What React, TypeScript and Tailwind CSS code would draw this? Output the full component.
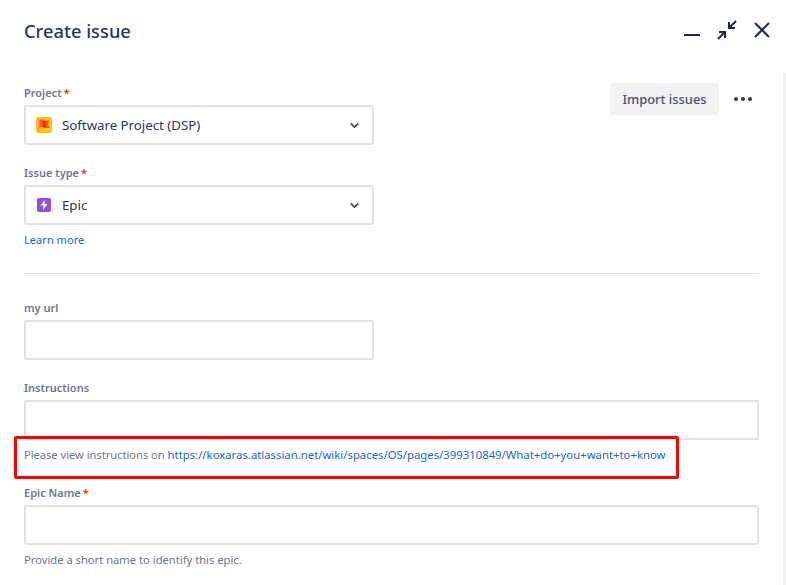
import { ChevronDown } from "lucide-react";

function Label({ text, required }: { text: string; required?: boolean }) {
  return (
    <div className="h-[20px] flex items-center text-[11px] font-semibold leading-[16px] text-[#6b778c]">
      {text}
      {required && <span className="ml-[2px] text-[#de350b]">*</span>}
    </div>
  );
}

function Input({ narrow }: { narrow?: boolean }) {
  return <div className={`h-[40px] mt-[2px] rounded-[3px] border-2 border-[#dfe1e6] bg-white ${narrow ? "w-[350px]" : "w-full"}`} />;
}

function Select({ icon, text }: { icon: React.ReactNode; text: string }) {
  return (
    <div className="h-[40px] w-[350px] mt-[2px] rounded-[3px] border-2 border-[#dfe1e6] bg-white flex items-center pl-[10px] pr-[11px]">
      <div className="w-[16px] h-[16px] flex items-center justify-center">{icon}</div>
      <span className="ml-[10px] pt-[2px] text-[13.250px] text-[#253858]">{text}</span>
      <ChevronDown className="ml-auto w-[13px] h-[13px] text-[#42526e]" strokeWidth={3.500} />
    </div>
  );
}

export default function App() {
  return (
    <div className="relative h-[585px] w-[786px] overflow-hidden bg-white font-['Noto_Sans',sans-serif]">
      {/* Header */}
      <div className="h-[63px] pl-[24px] pr-[12px] flex items-center">
        <h1 className="mb-[2px] text-[18.300px] font-medium text-[#253858]">Create issue</h1>
        <div className="ml-auto mb-[3px] flex items-center gap-[11px] text-[#172b4d]">
          <svg width="24" height="24" viewBox="0 0 24 24" fill="none" stroke="currentColor" strokeWidth="2">
            <path d="M4 17h16" />
          </svg>
          <svg width="24" height="24" viewBox="0 0 24 24" fill="none" stroke="currentColor" strokeWidth="2">
            <path d="M21 3l-6.500 6.500M14 4v6h6M3 21l6.500-6.500M10 20v-6H4" />
          </svg>
          <svg width="24" height="24" viewBox="0 0 24 24" fill="none" stroke="currentColor" strokeWidth="2">
            <path d="M5 5l14 14M19 5L5 19" />
          </svg>
        </div>
      </div>

      {/* Form */}
      <div className="pl-[24px] pr-[27px]">
        <div className="flex justify-between">
          <div className="pt-[20px]">
            <Label text="Project" required />
            <Select
              text="Software Project (DSP)"
              icon={
                <div className="w-[16px] h-[16px] rounded-[2px] bg-[#ffc400] flex items-center justify-center">
                  <svg width="14" height="14" viewBox="0 0 14 14">
                    <path d="M1 1h1.500v12H1z" fill="#ff8f73" />
                    <path d="M2.500 1.500h4v1h6l-1.500 3.500 1.500 4h-6v-1h-4z" fill="#ff5630" />
                    <path d="M6 3h3v6H6z" fill="#de350b" />
                  </svg>
                </div>
              }
            />
          </div>
          <div className="pt-[20px] flex items-start gap-[12px] pr-[4px]">
            <button className="h-[32px] w-[109px] pt-[1px] rounded-[3px] bg-[#f1f2f4] text-[12.900px] font-medium text-[#42526e]">
              Import issues
            </button>
            <svg className="mt-[8px]" width="24" height="16" viewBox="0 0 24 16" fill="#253858">
              <circle cx="5" cy="8" r="2" />
              <circle cx="12" cy="8" r="2" />
              <circle cx="19" cy="8" r="2" />
            </svg>
          </div>
        </div>

        <div className="mt-[18px]">
          <Label text="Issue type" required />
          <Select
            text="Epic"
            icon={
              <div className="w-[14px] h-[14px] rounded-[2px] bg-[#904ee2] flex items-center justify-center">
                <svg width="8" height="10" viewBox="0 0 8 10" fill="white">
                  <path d="M4.500 0L.5 5.500h3L3 10l4.500-6h-3z" />
                </svg>
              </div>
            }
          />
        </div>
        <a className="block mt-[6px] text-[11.100px] leading-[18px] text-[#1565dc]">Learn more</a>

        <div className="mt-[24px] h-px bg-[#dfe1e6]" />

        <div className="mt-[24px]">
          <Label text="my url" />
          <Input narrow />
        </div>

        <div className="mt-[18px]">
          <Label text="Instructions" />
          <Input />
          <p className="mt-[6px] text-[11.100px] leading-[18px] text-[#6b778c]">
            Please view instructions on{" "}
            <a className="text-[11.340px] text-[#1565dc]">https://koxaras.atlassian.net/wiki/spaces/OS/pages/399310849/What+do+you+want+to+know</a>
          </p>
        </div>

        <div className="mt-[19px]">
          <Label text="Epic Name" required />
          <Input />
          <p className="mt-[6px] text-[11.200px] leading-[18px] text-[#6b778c]">Provide a short name to identify this epic.</p>
        </div>
      </div>

      {/* Highlight box */}
      <div className="absolute left-[14px] top-[436px] w-[665px] h-[43px] rounded-[2px] border-[3px] border-[#ff0000]" />

      {/* Scrollbar */}
      <div className="absolute right-0 top-[73px] bottom-0 w-[3px] bg-[#f1f1f1]" />
    </div>
  );
}
